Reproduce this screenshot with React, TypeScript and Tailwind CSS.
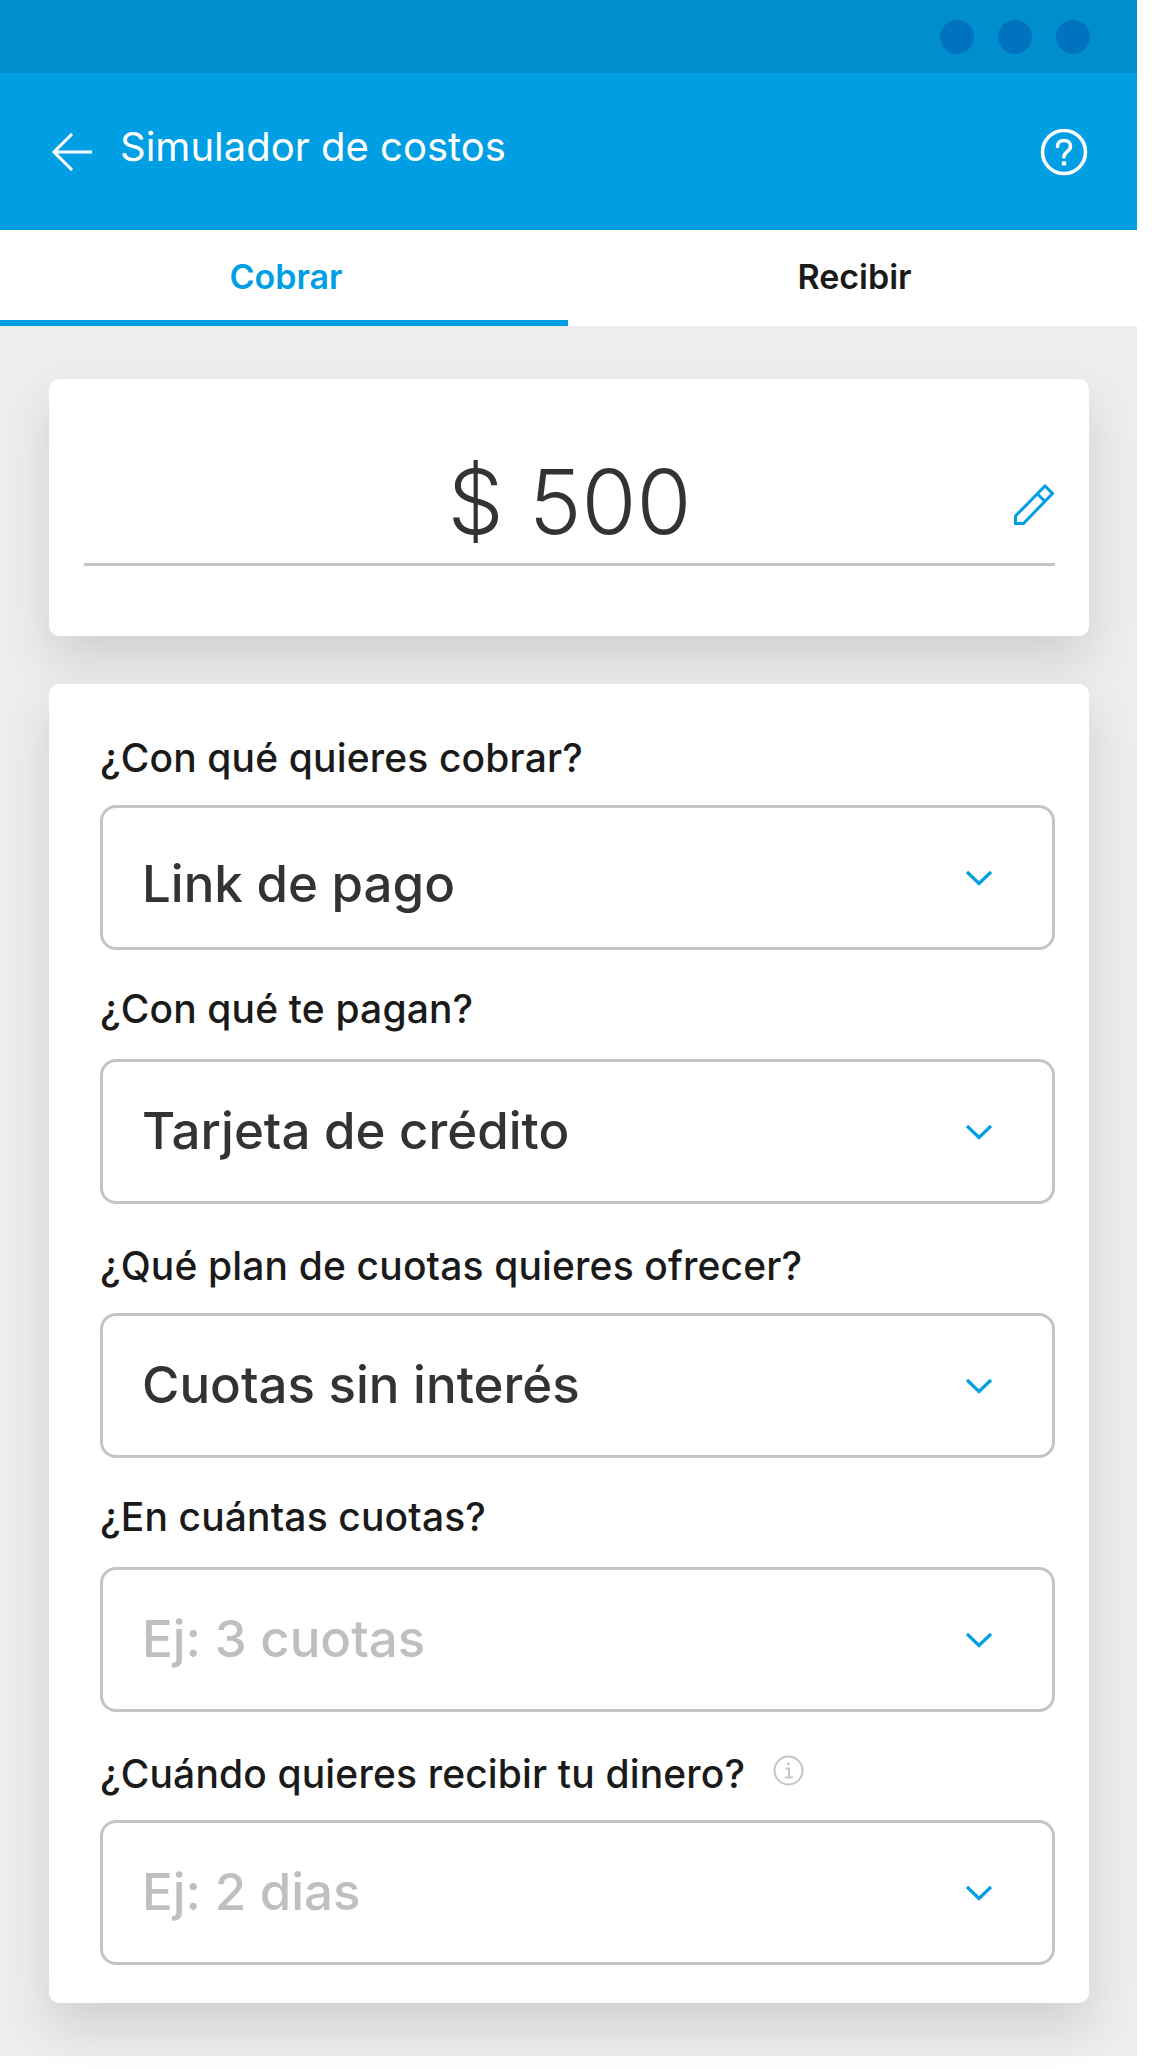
import React from 'react';

const fields = [
  { label: '¿Con qué quieres cobrar?', value: 'Link de pago', top: 'mt-[51px]', gap: 'mt-[24px]', shift: 'relative top-[7px]' },
  { label: '¿Con qué te pagan?', value: 'Tarjeta de crédito', top: 'mt-[36px]', gap: 'mt-[27px]', shift: '' },
  { label: '¿Qué plan de cuotas quieres ofrecer?', value: 'Cuotas sin interés', top: 'mt-[39px]', gap: 'mt-[24px]', shift: '' },
  { label: '¿En cuántas cuotas?', value: 'Ej: 3 cuotas', top: 'mt-[36px]', gap: 'mt-[27px]', shift: '', placeholder: true },
  { label: '¿Cuándo quieres recibir tu dinero?', value: 'Ej: 2 dias', top: 'mt-[39px]', gap: 'mt-[23px]', shift: '', placeholder: true, info: true },
];

const BackArrow = () => (
  <svg width="42" height="40" viewBox="0 0 42 40" fill="none" stroke="#fff" strokeWidth="3">
    <path d="M41 20 H3 M21 2 L3 20 L21 38" />
  </svg>
);

const HelpIcon = () => (
  <svg width="48" height="48" viewBox="0 0 48 48" fill="none" stroke="#fff" strokeWidth="3.6">
    <circle cx="24" cy="24" r="21.5" />
    <path d="M17.5 18.5 C17.5 10.5 30.5 10.5 30.5 18.5 C30.5 23.5 24 23.5 24 29" strokeLinecap="round" />
    <circle cx="24" cy="35.5" r="2.4" fill="#fff" stroke="none" />
  </svg>
);

const PencilIcon = () => (
  <svg width="41" height="41" viewBox="0 0 41 41" fill="none" stroke="#009ee3" strokeWidth="3">
    <path d="M1.5 39.5 V32 L31 2 L38.5 9.5 L9.5 39.5 Z" />
    <path d="M23 9.5 L31 17.5" />
  </svg>
);

const InfoIcon = () => (
  <svg width="31" height="31" viewBox="0 0 31 31" fill="none" stroke="#c4c4c4" strokeWidth="2" className="relative -top-[4px]">
    <circle cx="15.5" cy="15.5" r="14" />
    <circle cx="15.5" cy="9" r="1.4" fill="#c4c4c4" stroke="none" />
    <path d="M12.5 13.5 H16 V22.5 M12 22.5 H20" />
  </svg>
);

const Chevron = () => (
  <svg width="26" height="16" viewBox="0 0 26 16" fill="none" stroke="#009ee3" strokeWidth="3.2">
    <path d="M1 2 L13 13.5 L25 2" />
  </svg>
);

export default function App() {
  return (
    <div className="min-h-[2069px] bg-white font-['Inter',sans-serif]">
      <div className="w-[1137px]">
        <div className="flex h-[73px] items-center justify-end gap-[24px] bg-[#008ecd] pr-[47px]">
          <div className="h-[34px] w-[34px] rounded-full bg-[#0073c0]" />
          <div className="h-[34px] w-[34px] rounded-full bg-[#0073c0]" />
          <div className="h-[34px] w-[34px] rounded-full bg-[#0073c0]" />
        </div>
        <div className="flex h-[157px] items-center justify-between bg-[#009ee3] pl-[51px] pr-[49px]">
          <div className="flex items-center gap-[27px]">
            <BackArrow />
            <span className="relative -top-[5px] text-[40px] text-white">Simulador de costos</span>
          </div>
          <HelpIcon />
        </div>
        <div className="flex h-[96px] bg-white">
          <div className="flex w-[568px] items-center justify-center border-b-[6px] border-[#009ee3] pl-[4px] pt-[3px] text-[34px] font-semibold text-[#009ee3]">Cobrar</div>
          <div className="flex flex-1 items-center justify-center pb-[3px] pl-[4px] text-[34px] font-semibold text-[#1a1a1a]">Recibir</div>
        </div>
        <div className="h-[1730px] bg-[#ededed] pl-[49px] pr-[48px] pt-[53px]">
          <div className="h-[257px] rounded-[10px] bg-white pl-[35px] pr-[34px] pt-[70px] shadow-[0_24px_48px_rgba(0,0,0,0.12)]">
            <div className="relative h-[117px] border-b-[3px] border-[#c4c4c4] text-center text-[89px] font-light leading-[106px] text-[#333333]">
              $ 500
              <div className="absolute right-0 top-[35px]"><PencilIcon /></div>
            </div>
          </div>
          <div className="mt-[48px] h-[1319px] overflow-hidden rounded-[10px] bg-white pl-[51px] pr-[34px] shadow-[0_24px_48px_rgba(0,0,0,0.12)]">
            {fields.map((f) => (
              <div key={f.label} className={f.top}>
                <div className="flex h-[46px] items-center gap-[28px] text-[39px] font-medium tracking-[0.15px] text-[#1a1a1a]">
                  {f.label}
                  {f.info && <InfoIcon />}
                </div>
                <div className={`${f.gap} flex h-[145px] items-center justify-between rounded-[16px] border-[3px] border-[#c4c4c4] pl-[39px] pr-[60px]`}>
                  <span className={f.placeholder ? 'text-[51px] font-medium text-[#bfbfbf]' : `${f.shift} text-[51px] font-medium text-[#333333]`}>{f.value}</span>
                  <Chevron />
                </div>
              </div>
            ))}
          </div>
        </div>
      </div>
    </div>
  );
}
